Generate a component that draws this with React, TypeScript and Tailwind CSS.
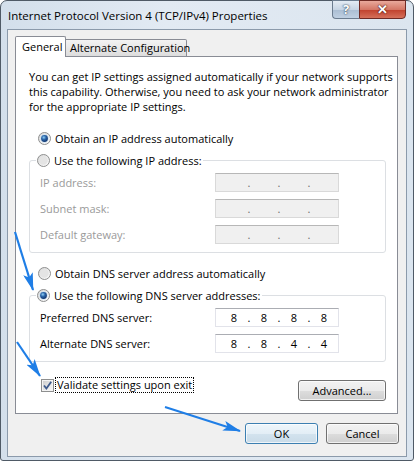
import React from "react";

const Radio = ({ checked }: { checked?: boolean }) => (
  <svg width="13" height="13" viewBox="0 0 13 13" className="shrink-0">
    <defs>
      <linearGradient id={checked ? "rg1" : "rg0"} x1="0" y1="0" x2="1" y2="1">
        <stop offset="0" stopColor="#d6d6d6" />
        <stop offset="1" stopColor="#ffffff" />
      </linearGradient>
      <radialGradient id="rdot" cx="0.4" cy="0.35" r="0.7">
        <stop offset="0" stopColor="#8fd0f6" />
        <stop offset="0.45" stopColor="#2a64a8" />
        <stop offset="1" stopColor="#0f2f66" />
      </radialGradient>
    </defs>
    <circle cx="6.5" cy="6.5" r="6" fill={`url(#${checked ? "rg1" : "rg0"})`} stroke="#8e8f8f" />
    <circle cx="6.5" cy="6.5" r="4.2" fill={checked ? "#cfe3f3" : "#e4e4e4"} />
    {checked && <circle cx="6.5" cy="6.5" r="3.4" fill="url(#rdot)" />}
  </svg>
);

const IpBox = ({ parts, disabled }: { parts: string[]; disabled?: boolean }) => (
  <div
    className={`w-[124px] h-[19px] flex items-center pl-[5px] border ${
      disabled
        ? "bg-[#f0f0f0] border-[#d9d9d9] border-t-[#b7b7b7]"
        : "bg-white border-[#e2e3ea] border-t-[#abadb3] text-black"
    }`}
  >
    {parts.map((p, i) => (
      <React.Fragment key={i}>
        <span className="w-[26px] text-center">{p}</span>
        {i < 3 && <span className={`w-[4px] text-center ${disabled ? "text-[#6d6d6d]" : ""}`}>.</span>}
      </React.Fragment>
    ))}
  </div>
);

const Row = ({ label, parts, disabled }: { label: string; parts: string[]; disabled?: boolean }) => (
  <div className="flex items-center h-[19px]">
    <span className={`w-[175px] ${disabled ? "text-[#9a9a9a]" : "text-black"}`}>{label}</span>
    <IpBox parts={parts} disabled={disabled} />
  </div>
);

const WinButton = ({ label, primary, w }: { label: string; primary?: boolean; w: string }) => (
  <div
    className={`${w} h-[21px] rounded-[3px] border flex items-center justify-center ${
      primary
        ? "border-[#3c7fb1] bg-[linear-gradient(#eef6fb_0%,#e3eef6_50%,#d3e3ee_51%,#c9dbe8_100%)]"
        : "border-[#707070] bg-[linear-gradient(#f2f2f2_0%,#ebebeb_50%,#dddddd_51%,#cfcfcf_100%)]"
    } shadow-[inset_0_0_0_1px_rgba(255,255,255,0.7)]`}
  >
    {label}
  </div>
);

export default function App() {
  return (
    <div className="relative w-[414px] h-[461px] overflow-hidden bg-white font-['Open_Sans',sans-serif] text-[11px] leading-[15px] text-black whitespace-nowrap">
      <div className="w-full h-full flex flex-col rounded-t-[7px] rounded-b-[3px] border border-[#4f5a66] bg-[linear-gradient(90deg,#d3dfeb_0%,#e2eaf3_40%,#dbe5ef_100%)] px-[6px] pb-[3px]">
        {/* title bar */}
        <div className="h-[28px] flex items-start shrink-0">
          <span className="pl-[1px] pt-[7px] text-[11.5px] leading-[15px]">
            Internet Protocol Version 4 (TCP/IPv4) Properties
          </span>
          <div className="ml-auto flex mr-[1px] -mt-[1px]">
            <div className="w-[27px] h-[19px] rounded-bl-[4px] border border-[#6b7c8f] border-r-0 bg-[linear-gradient(#e4ecf4_0%,#c7d5e4_50%,#aabdd2_51%,#bfd0e2_100%)] flex items-center justify-center text-[13px] font-bold text-white [text-shadow:0_0_2px_#34495f,0_0_1px_#34495f]">
              ?
            </div>
            <div className="w-[47px] h-[19px] rounded-br-[4px] border border-[#6f2a24] bg-[linear-gradient(#e9a99c_0%,#d47766_50%,#c0402c_51%,#d5705a_100%)] flex items-center justify-center text-[13px] font-bold text-white [text-shadow:0_0_2px_#4a0f08,0_0_1px_#4a0f08]">
              ✕
            </div>
          </div>
        </div>

        {/* client area */}
        <div className="flex-1 flex flex-col border border-[#8b9aab] bg-[#f0f0f0] pl-[7px] pr-[8px] pt-[7px]">
          {/* tabs */}
          <div className="flex items-end h-[20px] relative z-10 -mb-[1px]">
            <div className="w-[51px] h-[21px] bg-white border border-[#898c95] border-b-0 rounded-t-[2px] pl-[6px] pt-[2px]">
              General
            </div>
            <div className="w-[121px] h-[18px] border border-[#898c95] border-l-0 border-b-[#898c95] rounded-tr-[2px] bg-[linear-gradient(#f3f3f3,#e6e6e6_60%,#dcdcdc)] pl-[4px] leading-[16px]">
              Alternate Configuration
            </div>
          </div>

          {/* panel */}
          <div className="h-[358px] bg-white border border-[#898c95] pl-[13px] pr-[11px] pt-[12px] flex flex-col">
            <p>
              You can get IP settings assigned automatically if your network supports
              <br />
              this capability. Otherwise, you need to ask your network administrator
              <br />
              for the appropriate IP settings.
            </p>

            <div className="flex items-center gap-[4px] pl-[9px] mt-[17px] h-[15px]">
              <Radio checked />
              <span>Obtain an IP address automatically</span>
            </div>

            <fieldset className="mt-[6px] border border-[#dcdfe3] rounded-[3px] pl-[10px] pb-[8px]">
              <legend className="ml-[-4px] px-[1px] flex items-center gap-[4px] h-[16px]">
                <Radio />
                <span>Use the following IP address:</span>
              </legend>
              <div className="flex flex-col gap-[7px] pt-[5px]">
                <Row label="IP address:" parts={["", "", "", ""]} disabled />
                <Row label="Subnet mask:" parts={["", "", "", ""]} disabled />
                <Row label="Default gateway:" parts={["", "", "", ""]} disabled />
              </div>
            </fieldset>

            <div className="flex items-center gap-[4px] pl-[9px] mt-[13px] h-[15px]">
              <Radio />
              <span>Obtain DNS server address automatically</span>
            </div>

            <fieldset className="mt-[6px] border border-[#dcdfe3] rounded-[3px] pl-[10px] pb-[8px]">
              <legend className="ml-[-4px] px-[1px] flex items-center gap-[4px] h-[16px]">
                <Radio checked />
                <span>Use the following DNS server addresses:</span>
              </legend>
              <div className="flex flex-col gap-[7px] pt-[5px]">
                <Row label="Preferred DNS server:" parts={["8", "8", "8", "8"]} />
                <Row label="Alternate DNS server:" parts={["8", "8", "4", "4"]} />
              </div>
            </fieldset>

            <div className="flex items-start justify-between mt-[15px]">
              <div className="flex items-center gap-[2px] pl-[12px] h-[16px]">
                <svg width="13" height="13" viewBox="0 0 13 13" className="shrink-0">
                  <defs>
                    <linearGradient id="cbg" x1="0" y1="0" x2="1" y2="1">
                      <stop offset="0" stopColor="#cfcfcf" />
                      <stop offset="1" stopColor="#f7f7f7" />
                    </linearGradient>
                  </defs>
                  <rect x="0.5" y="0.5" width="12" height="12" fill="#f4f4f4" stroke="#8e8f8f" />
                  <rect x="2" y="2" width="9" height="9" fill="url(#cbg)" />
                  <path d="M3 6.5 L5.4 9.6 L10.2 2.8" fill="none" stroke="#3e5a8c" strokeWidth="1.8" />
                </svg>
                <span className="outline outline-1 outline-dotted outline-black px-[1px] leading-[14px]">
                  Validate settings upon exit
                </span>
              </div>
              <div className="mt-[3px]">
                <WinButton label="Advanced..." w="w-[88px]" />
              </div>
            </div>
          </div>

          {/* dialog buttons */}
          <div className="flex justify-end gap-[8px] mt-[9px] -mr-[1px]">
            <WinButton label="OK" primary w="w-[73px]" />
            <WinButton label="Cancel" w="w-[73px]" />
          </div>
        </div>
      </div>

      {/* annotation arrows */}
      <svg className="absolute inset-0 pointer-events-none" width="414" height="461" viewBox="0 0 414 461">
        <defs>
          <marker id="ah" markerUnits="userSpaceOnUse" markerWidth="18" markerHeight="10" refX="17" refY="5" orient="auto">
            <path d="M0 0 L18 5 L0 10 L4 5 Z" fill="#1f7ee6" />
          </marker>
        </defs>
        <line x1="15" y1="232" x2="33" y2="290" stroke="#1f7ee6" strokeWidth="2.2" markerEnd="url(#ah)" />
        <line x1="17" y1="342" x2="40" y2="376" stroke="#1f7ee6" strokeWidth="2.2" markerEnd="url(#ah)" />
        <line x1="165" y1="407" x2="240" y2="431" stroke="#1f7ee6" strokeWidth="2.2" markerEnd="url(#ah)" />
      </svg>
    </div>
  );
}
